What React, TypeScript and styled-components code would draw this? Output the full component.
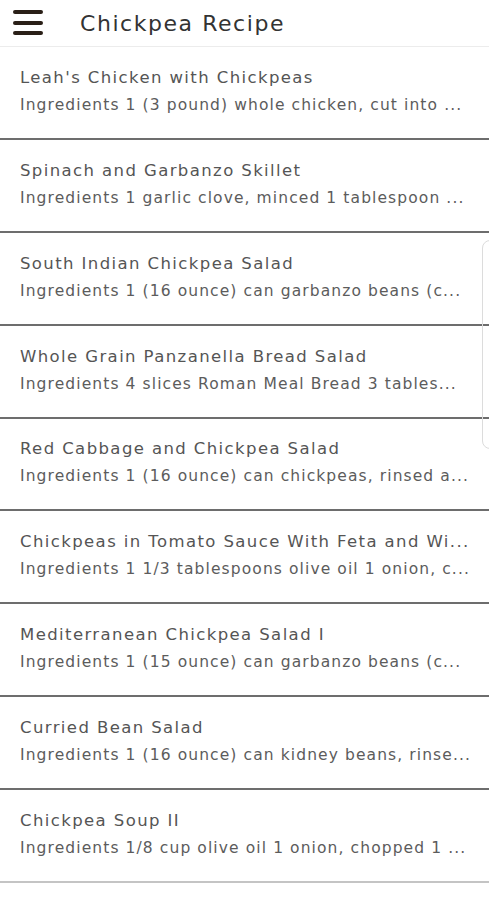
import React from "react";
import styled, { createGlobalStyle } from "styled-components";

const Global = createGlobalStyle`
  html, body { margin: 0; padding: 0; background: #fff; }
  body { font-family: "DejaVu Sans", "Liberation Sans", sans-serif; }
`;

const Page = styled.div`
  position: relative;
  width: 489px;
  height: 900px;
  overflow: hidden;
  background: #fff;
`;

const Header = styled.header`
  height: 46px;
  display: flex;
  align-items: center;
  border-bottom: 1px solid #ececec;
  box-sizing: content-box;
`;

const MenuButton = styled.div`
  width: 30px;
  margin-left: 13px;
  display: flex;
  flex-direction: column;
  gap: 6.5px;
  margin-top: -1px;
`;

const Bar = styled.span`
  display: block;
  height: 4px;
  border-radius: 2px;
  background: #2a1f17;
`;

const Title = styled.h1`
  margin: 0 0 0 37px;
  font-size: 22px;
  font-weight: 400;
  color: #333;
  letter-spacing: 1.55px;
`;

const List = styled.ul`
  list-style: none;
  margin: 0;
  padding: 0;
`;

const Row = styled.li<{ $last?: boolean }>`
  height: 90.875px;
  border-bottom: 2px solid ${(p) => (p.$last ? "#c4c4c4" : "#6d6d6d")};
  padding: 0 0 0 20px;
  display: flex;
  flex-direction: column;
  justify-content: center;
  gap: 5px;
  white-space: nowrap;
  overflow: hidden;
`;

const RowTitle = styled.div`
  font-size: 16.5px;
  line-height: 22px;
  color: #555;
  letter-spacing: 1.4px;
  margin-top: -2px;
`;

const RowSub = styled.div`
  font-size: 15.5px;
  line-height: 22px;
  color: #5c5c5c;
  letter-spacing: 1.1px;
`;

const EdgeHandle = styled.div`
  position: absolute;
  left: 482px;
  top: 240px;
  width: 20px;
  height: 207px;
  border: 1px solid #dcdcdc;
  border-radius: 8px;
  background: transparent;
`;

const recipes = [
  ["Leah's Chicken with Chickpeas", "Ingredients 1 (3 pound) whole chicken, cut into ..."],
  ["Spinach and Garbanzo Skillet", "Ingredients 1 garlic clove, minced 1 tablespoon ..."],
  ["South Indian Chickpea Salad", "Ingredients 1 (16 ounce) can garbanzo beans (c..."],
  ["Whole Grain Panzanella Bread Salad", "Ingredients 4 slices Roman Meal Bread 3 tables..."],
  ["Red Cabbage and Chickpea Salad", "Ingredients 1 (16 ounce) can chickpeas, rinsed a..."],
  ["Chickpeas in Tomato Sauce With Feta and Wi...", "Ingredients 1 1/3 tablespoons olive oil 1 onion, c..."],
  ["Mediterranean Chickpea Salad I", "Ingredients 1 (15 ounce) can garbanzo beans (c..."],
  ["Curried Bean Salad", "Ingredients 1 (16 ounce) can kidney beans, rinse..."],
  ["Chickpea Soup II", "Ingredients 1/8 cup olive oil 1 onion, chopped 1 ..."],
];

export default function App() {
  return (
    <Page>
      <Global />
      <Header>
        <MenuButton>
          <Bar />
          <Bar />
          <Bar />
        </MenuButton>
        <Title>Chickpea Recipe</Title>
      </Header>
      <List>
        {recipes.map(([t, s], i) => (
          <Row key={i} $last={i === recipes.length - 1}>
            <RowTitle>{t}</RowTitle>
            <RowSub>{s}</RowSub>
          </Row>
        ))}
      </List>
      <EdgeHandle />
    </Page>
  );
}
